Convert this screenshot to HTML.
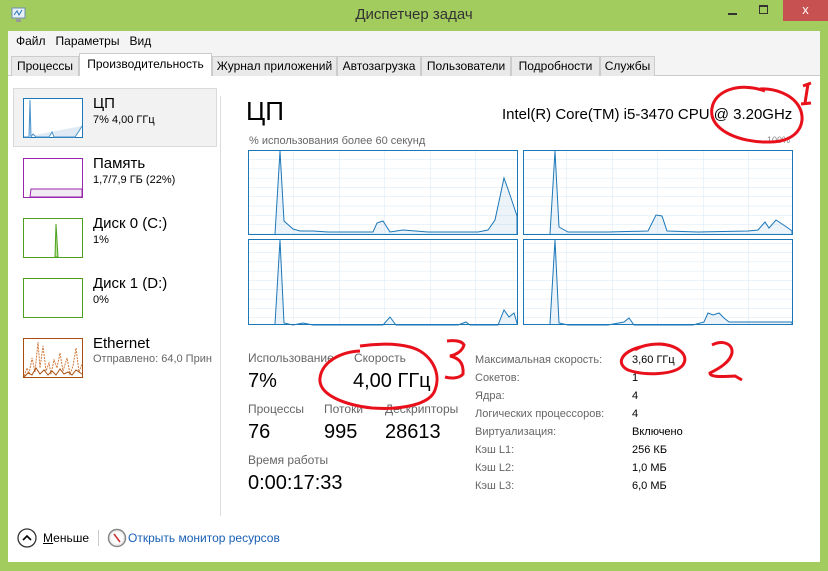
<!DOCTYPE html>
<html><head><meta charset="utf-8"><style>
*{margin:0;padding:0;box-sizing:border-box}
body{width:828px;height:571px;background:#a3cc5f;font-family:"Liberation Sans","Noto Sans CJK SC",sans-serif;position:relative;overflow:hidden;color:#000}
.a{position:absolute;white-space:nowrap}
.title{left:0;top:0;width:828px;height:30px;text-align:center;font-size:15px;line-height:30px;color:#333}
.menu{left:8px;top:31px;width:812px;height:22px;background:#f4f4f4;font-size:12px;line-height:21px}
.tabs{left:8px;top:53px;width:812px;height:23px;background:#f4f4f4;border-bottom:1px solid #ccc}
.tab{position:absolute;top:3px;height:20px;border:1px solid #ccc;border-bottom:none;background:#e9e9e9;font-size:12px;line-height:18px;text-align:center}
.content{left:8px;top:76px;width:812px;height:486px;background:#fff}
.g{font-size:12px;color:#666}
.sm{font-size:11px}
</style></head><body>
<div class="a title">Диспетчер задач</div>
<svg class="a" style="left:10px;top:6px" width="18" height="18"><rect x="2" y="2" width="13" height="10" fill="#e8f0f8" stroke="#6b8fb0"/><polyline points="4,9 7,5 9,9 12,4" fill="none" stroke="#2a72b8"/><rect x="6" y="13" width="5" height="3" fill="#999"/></svg>
<div class="a" style="left:728px;top:13px;width:9px;height:2px;background:#333"></div>
<div class="a" style="left:759px;top:5px;width:9px;height:9px;border:1.5px solid #333;border-top-width:2px"></div>
<div class="a" style="left:783px;top:0;width:45px;height:21px;background:#c75050;color:#fff;text-align:center;font-size:13px;line-height:20px">x</div>
<div class="a menu"><span style="margin-left:8px">Файл</span><span style="margin-left:10px">Параметры</span><span style="margin-left:10px">Вид</span></div>
<div class="a tabs">
<div class="tab" style="left:3px;width:68px">Процессы</div>
<div class="tab" style="left:71px;top:0;height:24px;width:133px;background:#fff;line-height:21px">Производительность</div>
<div class="tab" style="left:204px;width:125px">Журнал приложений</div>
<div class="tab" style="left:329px;width:84px">Автозагрузка</div>
<div class="tab" style="left:413px;width:90px">Пользователи</div>
<div class="tab" style="left:503px;width:89px">Подробности</div>
<div class="tab" style="left:592px;width:55px">Службы</div>
</div>
<div class="a content"></div>
<!-- sidebar -->
<div class="a" style="left:13px;top:88px;width:204px;height:59px;background:#f2f2f2;border:1px solid #dadada"></div>
<div class="a" style="left:220px;top:96px;width:1px;height:420px;background:#ddd"></div>
<svg class="a" style="left:23px;top:98px" width="60" height="160">
<rect x="0.5" y="0.5" width="59" height="39" fill="#fff" stroke="#1c77b8"/>
<polyline points="1,39 6,39 7,2 8,39 10,36 13,39 26,39 29,34 31,39 52,39 56,33 59,28" fill="#dfeaf5" stroke="#4a93cc"/>
</svg>
<svg class="a" style="left:23px;top:158px" width="60" height="40"><rect x="0.5" y="0.5" width="59" height="39" fill="#fff" stroke="#9a26b0"/><polygon points="7,39 8,31 59,31 59,39" fill="#f1eaf3" stroke="#9a26b0"/></svg>
<svg class="a" style="left:23px;top:218px" width="60" height="40"><rect x="0.5" y="0.5" width="59" height="39" fill="#fff" stroke="#4da01e"/><polygon points="32,39 33,6 35,39" fill="#bde29e" stroke="#4da01e"/></svg>
<svg class="a" style="left:23px;top:278px" width="60" height="40"><rect x="0.5" y="0.5" width="59" height="39" fill="#fff" stroke="#4da01e"/></svg>
<svg class="a" style="left:23px;top:338px" width="60" height="40"><rect x="0.5" y="0.5" width="59" height="39" fill="#fff" stroke="#a84e0e"/>
<polyline points="1,38 4,30 6,36 9,20 12,34 15,4 17,30 20,8 23,33 26,25 28,36 31,22 34,30 37,15 40,33 44,20 47,36 50,28 53,10 56,34 59,26" fill="none" stroke="#d27a3c" stroke-dasharray="2,1"/>
<polyline points="1,39 5,35 9,37 13,30 17,36 21,32 25,37 29,33 33,37 37,31 41,36 45,34 49,37 53,32 59,36" fill="none" stroke="#a84e0e"/></svg>
<div class="a" style="left:93px;top:95px;font-size:15px">ЦП</div>
<div class="a" style="left:93px;top:114px;font-size:11px">7% 4,00 ГГц</div>
<div class="a" style="left:93px;top:155px;font-size:15px">Память</div>
<div class="a" style="left:93px;top:174px;font-size:11px">1,7/7,9 ГБ (22%)</div>
<div class="a" style="left:93px;top:215px;font-size:15px">Диск 0 (C:)</div>
<div class="a" style="left:93px;top:234px;font-size:11px">1%</div>
<div class="a" style="left:93px;top:275px;font-size:15px">Диск 1 (D:)</div>
<div class="a" style="left:93px;top:294px;font-size:11px">0%</div>
<div class="a" style="left:93px;top:335px;font-size:15px">Ethernet</div>
<div class="a" style="left:93px;top:353px;font-size:11px;color:#666;width:127px;overflow:hidden">Отправлено: 64,0 Прин</div>
<!-- main -->
<div class="a" style="left:246px;top:95px;font-size:26px;line-height:32px">ЦП</div>
<div class="a" style="left:502px;top:106px;font-size:15px">Intel(R) Core(TM) i5-3470 CPU @ 3.20GHz</div>
<div class="a" style="left:249px;top:135px;font-size:11px;color:#666">% использования более 60 секунд</div>
<div class="a" style="left:767px;top:135px;font-size:9px;color:#888">100%</div>
<svg class="a" style="left:248px;top:150px" width="547" height="176">
<defs><pattern id="gr" x="0" y="0" width="45.5" height="9.3" patternUnits="userSpaceOnUse"><path d="M0 0V9.3M0 0H45.5" stroke="#d8e8f4" fill="none"/></pattern></defs>
<g stroke="#1c77b8" fill="url(#gr)"><rect x="0.5" y="0.5" width="269" height="84"/><rect x="275.5" y="0.5" width="269" height="84"/><rect x="0.5" y="89.5" width="269" height="85"/><rect x="275.5" y="89.5" width="269" height="85"/></g>
<g fill="rgba(28,119,184,0.08)" stroke="#1c77b8" stroke-width="1">
<polyline points="27,84 32,1 36,71 45,79 52,81 65,81 80,82 125,82 129,73 135,71 142,82 155,80 180,82 230,82 240,80 247,70 256,28 262,45 269,66 269,84"/>
<polyline points="302,84 307,1 311,77 320,82 360,82 400,81 408,65 414,66 419,81 450,82 500,81 510,80 517,72 521,78 528,70 540,78 544,81 544,84"/>
<polyline points="27,174 32,90 36,173 45,175 55,173 65,175 135,175 142,167 148,175 210,175 218,172 222,175 250,175 256,160 261,167 266,163 269,173 269,174"/>
<polyline points="302,174 307,90 311,173 320,175 360,175 376,172 381,168 386,175 440,175 445,175 456,172 460,163 465,165 471,163 476,168 481,172 544,172 544,174"/>
</g></svg>
<div class="a g" style="left:248px;top:351px">Использование</div>
<div class="a g" style="left:354px;top:351px">Скорость</div>
<div class="a" style="left:248px;top:370px;font-size:20px">7%</div>
<div class="a" style="left:353px;top:370px;font-size:20px">4,00 ГГц</div>
<div class="a g" style="left:248px;top:402px">Процессы</div>
<div class="a g" style="left:324px;top:402px">Потоки</div>
<div class="a g" style="left:385px;top:402px">Дескрипторы</div>
<div class="a" style="left:248px;top:421px;font-size:20px">76</div>
<div class="a" style="left:324px;top:421px;font-size:20px">995</div>
<div class="a" style="left:385px;top:421px;font-size:20px">28613</div>
<div class="a g" style="left:248px;top:453px">Время работы</div>
<div class="a" style="left:248px;top:472px;font-size:20px">0:00:17:33</div>
<div class="a g sm" style="left:475px;top:351px;line-height:18px">Максимальная скорость:<br>Сокетов:<br>Ядра:<br>Логических процессоров:<br>Виртуализация:<br>Кэш L1:<br>Кэш L2:<br>Кэш L3:</div>
<div class="a sm" style="left:632px;top:351px;line-height:18px">3,60 ГГц<br>1<br>4<br>4<br>Включено<br>256 КБ<br>1,0 МБ<br>6,0 МБ</div>
<!-- footer -->
<svg class="a" style="left:16px;top:527px" width="22" height="22"><circle cx="11" cy="11" r="9" fill="#fff" stroke="#333" stroke-width="1.3"/><path d="M7 13L11 9L15 13" fill="none" stroke="#000" stroke-width="1.6"/></svg>
<div class="a" style="left:43px;top:531px;font-size:12px"><u>М</u>еньше</div>
<div class="a" style="left:98px;top:530px;width:1px;height:16px;background:#ccc"></div>
<svg class="a" style="left:106px;top:527px" width="22" height="22"><circle cx="11" cy="11" r="8.5" fill="#eee" stroke="#888" stroke-width="1.5"/><circle cx="11" cy="11" r="6" fill="#fff"/><path d="M8 7L14 15" stroke="#c33" stroke-width="1.6"/></svg>
<div class="a" style="left:128px;top:531px;font-size:12px;color:#1a5fb4">Открыть монитор ресурсов</div>
<!-- red annotations -->
<svg class="a" style="left:0;top:0" width="828" height="571" fill="none" stroke="#e8101a" stroke-width="3">
<path d="M765 91 C740 82 715 90 712 108 C708 130 740 143 770 142 C800 142 808 120 798 105 C790 93 772 88 760 89"/>
<path d="M803 86 L811 83 M808 84 L805 103 M801 104 L811 103"/>
<path d="M360 351 C340 352 322 362 320 378 C318 395 345 405 372 408 C400 410 430 405 435 390 C442 372 430 352 410 347 C395 343 375 344 360 346"/>
<path d="M447 341 C455 340 462 341 464 345 C462 352 455 355 450 356 C458 358 464 362 463 374 C460 378 452 379 445 377"/>
<path d="M640 347 C622 352 615 363 628 370 C645 376 675 375 683 365 C690 354 676 345 660 344 C650 344 640 346 635 350"/>
<path d="M712 345 C722 340 733 343 732 353 C730 362 720 368 710 373 C710 377 720 377 735 376 L742 380"/>
</svg>
</body></html>
